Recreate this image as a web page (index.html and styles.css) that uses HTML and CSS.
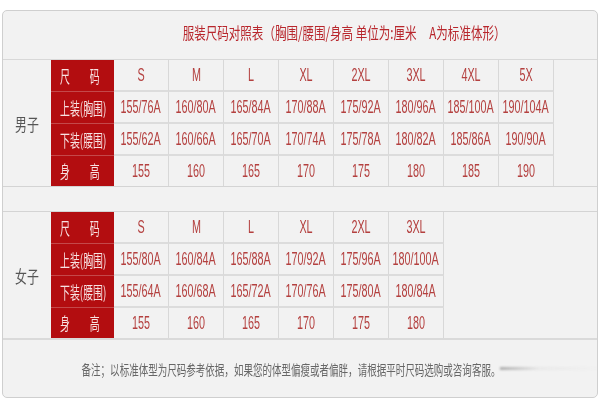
FILE: index.html
```html
<!DOCTYPE html>
<html lang="zh">
<head>
<meta charset="utf-8">
<title>服装尺码对照表</title>
<link rel="stylesheet" href="styles.css">
</head>
<body>
<div class="panel">
  <div class="title"><span class="sq t-title">服装尺码对照表（胸围/腰围/身高&nbsp;单位为:厘米&nbsp;&nbsp;&nbsp;&nbsp;&nbsp;A为标准体形）</span></div>

  <div class="sec men">
    <div class="lab"><span class="sq">男子</span></div>
    <div class="fill"></div>
    <div class="rh"><span class="sl">尺&emsp;&emsp;码</span></div>
    <div class="c"><span class="sq">S</span></div>
    <div class="c"><span class="sq">M</span></div>
    <div class="c"><span class="sq">L</span></div>
    <div class="c"><span class="sq">XL</span></div>
    <div class="c"><span class="sq">2XL</span></div>
    <div class="c"><span class="sq">3XL</span></div>
    <div class="c"><span class="sq">4XL</span></div>
    <div class="c"><span class="sq">5X</span></div>

    <div class="rh"><span class="sl">上装(胸围)</span></div>
    <div class="c"><span class="sq">155/76A</span></div>
    <div class="c"><span class="sq">160/80A</span></div>
    <div class="c"><span class="sq">165/84A</span></div>
    <div class="c"><span class="sq">170/88A</span></div>
    <div class="c"><span class="sq">175/92A</span></div>
    <div class="c"><span class="sq">180/96A</span></div>
    <div class="c"><span class="sq">185/100A</span></div>
    <div class="c"><span class="sq">190/104A</span></div>

    <div class="rh"><span class="sl">下装(腰围)</span></div>
    <div class="c"><span class="sq">155/62A</span></div>
    <div class="c"><span class="sq">160/66A</span></div>
    <div class="c"><span class="sq">165/70A</span></div>
    <div class="c"><span class="sq">170/74A</span></div>
    <div class="c"><span class="sq">175/78A</span></div>
    <div class="c"><span class="sq">180/82A</span></div>
    <div class="c"><span class="sq">185/86A</span></div>
    <div class="c"><span class="sq">190/90A</span></div>

    <div class="rh last"><span class="sl">身&emsp;&emsp;高</span></div>
    <div class="c last"><span class="sq">155</span></div>
    <div class="c last"><span class="sq">160</span></div>
    <div class="c last"><span class="sq">165</span></div>
    <div class="c last"><span class="sq">170</span></div>
    <div class="c last"><span class="sq">175</span></div>
    <div class="c last"><span class="sq">180</span></div>
    <div class="c last"><span class="sq">185</span></div>
    <div class="c last"><span class="sq">190</span></div>
  </div>

  <div class="gap"></div>

  <div class="sec women">
    <div class="lab"><span class="sq">女子</span></div>
    <div class="fill"></div>
    <div class="rh"><span class="sl">尺&emsp;&emsp;码</span></div>
    <div class="c"><span class="sq">S</span></div>
    <div class="c"><span class="sq">M</span></div>
    <div class="c"><span class="sq">L</span></div>
    <div class="c"><span class="sq">XL</span></div>
    <div class="c"><span class="sq">2XL</span></div>
    <div class="c"><span class="sq">3XL</span></div>

    <div class="rh"><span class="sl">上装(胸围)</span></div>
    <div class="c"><span class="sq">155/80A</span></div>
    <div class="c"><span class="sq">160/84A</span></div>
    <div class="c"><span class="sq">165/88A</span></div>
    <div class="c"><span class="sq">170/92A</span></div>
    <div class="c"><span class="sq">175/96A</span></div>
    <div class="c"><span class="sq">180/100A</span></div>

    <div class="rh"><span class="sl">下装(腰围)</span></div>
    <div class="c"><span class="sq">155/64A</span></div>
    <div class="c"><span class="sq">160/68A</span></div>
    <div class="c"><span class="sq">165/72A</span></div>
    <div class="c"><span class="sq">170/76A</span></div>
    <div class="c"><span class="sq">175/80A</span></div>
    <div class="c"><span class="sq">180/84A</span></div>

    <div class="rh last"><span class="sl">身&emsp;&emsp;高</span></div>
    <div class="c last"><span class="sq">155</span></div>
    <div class="c last"><span class="sq">160</span></div>
    <div class="c last"><span class="sq">165</span></div>
    <div class="c last"><span class="sq">170</span></div>
    <div class="c last"><span class="sq">175</span></div>
    <div class="c last"><span class="sq">180</span></div>
  </div>

  <div class="foot"><span class="sq">备注；以标准体型为尺码参考依据，如果您的体型偏瘦或者偏胖，请根据平时尺码选购或咨询客服。</span></div>
</div>
</body>
</html>
```

FILE: styles.css
```css
* { box-sizing: border-box; }

html, body {
  margin: 0;
  padding: 0;
  background: #ffffff;
}

body {
  padding: 10px 2px 0 2px;
  font-family: "Liberation Sans", "Noto Sans CJK SC", sans-serif;
}

.panel {
  width: 596px;
  height: 388px;
  background: #f2f2f2;
  border: 1px solid #cfcfcf;
  border-radius: 5px;
  display: flex;
  flex-direction: column;
  overflow: hidden;
}

.sq {
  display: inline-block;
  white-space: nowrap;
  transform: scaleX(0.6);
}

.sl {
  display: inline-block;
  white-space: nowrap;
  transform: scaleX(0.6);
  transform-origin: left center;
}

.title {
  height: 49px;
  flex: none;
  border-bottom: 1px solid #d8d8d8;
  display: flex;
  align-items: center;
  justify-content: center;
  padding-left: 88px;
  padding-bottom: 6px;
  color: #b8262c;
  font-family: "Noto Sans CJK SC", sans-serif;
  font-size: 16px;
}

.title .sq { transform: scaleX(0.72); }

.sec {
  display: grid;
  grid-template-rows: 32px 32px 32px 30px;
  flex: none;
}

.men { grid-template-columns: 48px 63px repeat(8, 55px) 1fr; }
.women { grid-template-columns: 48px 63px repeat(6, 55px) 1fr; }

.lab {
  grid-column: 1;
  grid-row: 1 / -1;
  display: flex;
  align-items: center;
  justify-content: center;
  color: #555555;
  font-family: "Noto Sans CJK SC", sans-serif;
  font-size: 17px;
  padding-top: 0;
}

.lab .sq { transform: scaleX(0.7); }

.fill {
  grid-column: -2 / -1;
  grid-row: 1 / -1;
}

.rh {
  background: #b30d10;
  color: #f7e2e2;
  font-family: "Noto Sans CJK SC", sans-serif;
  font-size: 16.5px;
  display: flex;
  align-items: center;
  padding-left: 9px;
  border-bottom: 1px solid #c4484a;
}

.c {
  display: flex;
  align-items: center;
  justify-content: center;
  color: #b4403f;
  font-size: 18px;
  border-right: 1px solid #d8d8d8;
  border-bottom: 2px solid #dcdcdc;
}

.rh.last, .c.last { border-bottom: none; }

.gap {
  height: 26px;
  flex: none;
  border-top: 1px solid #d4d4d4;
  border-bottom: 1px solid #d4d4d4;
}

.foot {
  flex: 1;
  border-top: 2px solid #dadada;
  display: flex;
  align-items: center;
  justify-content: center;
  padding-right: 18px;
  color: #666666;
  font-family: "Noto Sans CJK SC", sans-serif;
  font-size: 14px;
  position: relative;
}

.foot .sq { transform: scaleX(0.68); }

.foot::after {
  content: "";
  position: absolute;
  left: 497px;
  top: 27px;
  width: 98px;
  height: 3px;
  background: linear-gradient(to right, rgba(120,120,120,0.55), rgba(200,200,200,0.2) 40%, rgba(230,230,230,0.1));
  filter: blur(1px);
}
```
